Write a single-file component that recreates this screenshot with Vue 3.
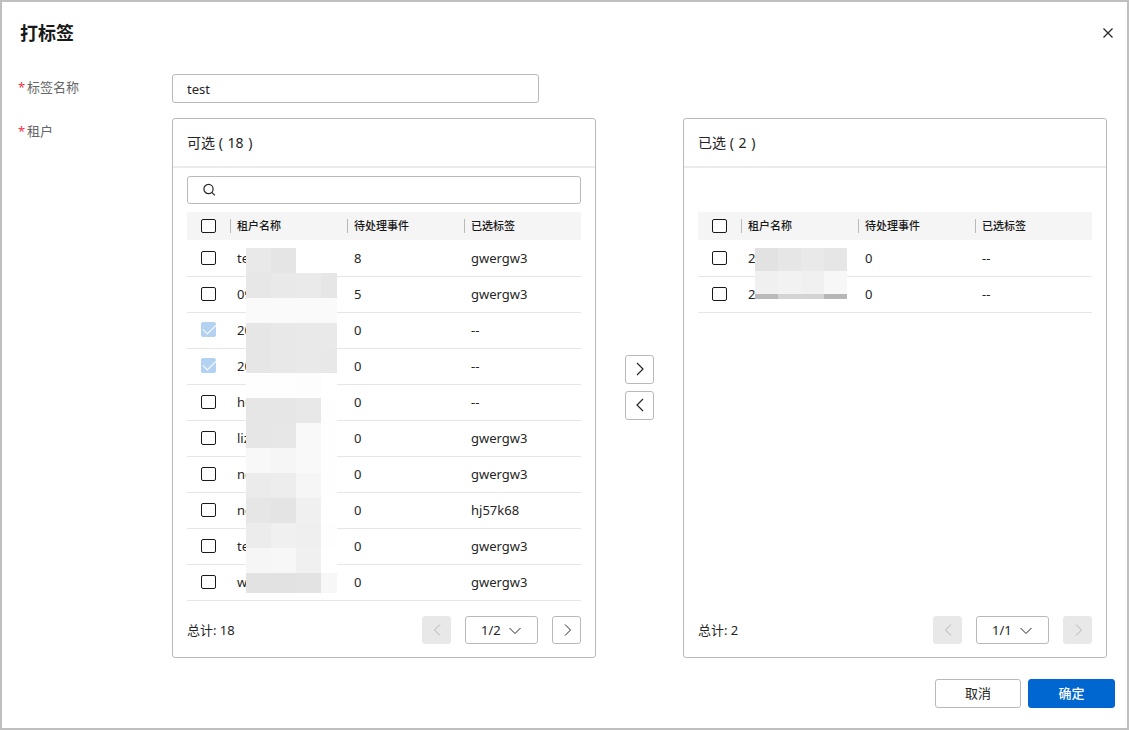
<template>
  <form class="dialog" @submit.prevent>
    <header class="dialog-head">
      <h1>打标签</h1>
      <button type="button" class="close" aria-label="关闭">
        <svg width="12" height="12" viewBox="0 0 12 12"><path d="M1.5 1.5l9 9M10.5 1.5l-9 9" /></svg>
      </button>
    </header>

    <div class="field">
      <label class="field-label" for="tag-name"><span class="star">*</span>标签名称</label>
      <input id="tag-name" v-model="tagName" class="text-input" type="text" />
    </div>

    <div class="field field-transfer">
      <span id="tenant-label" class="field-label"><span class="star">*</span>租户</span>
      <div class="transfer" role="group" aria-labelledby="tenant-label">
        <template v-for="(panel, index) in panels" :key="panel.id">
          <!-- Move buttons sit between the two panels -->
          <div v-if="index === 1" class="moves">
            <button type="button" class="square" aria-label="添加">
              <svg width="14" height="16" viewBox="0 0 14 16"><path d="M4 2l6 6-6 6" /></svg>
            </button>
            <button type="button" class="square" aria-label="移除">
              <svg width="14" height="16" viewBox="0 0 14 16"><path d="M10 2L4 8l6 6" /></svg>
            </button>
          </div>

          <section class="panel">
            <h2 class="panel-head">
              {{ panel.title }} ( <span class="count">{{ panel.total }}</span> )
            </h2>
            <div class="panel-body">
              <div class="toolbar">
                <label v-if="panel.searchable" class="search">
                  <svg width="14" height="14" viewBox="0 0 14 14">
                    <circle cx="6.5" cy="6" r="4.6" />
                    <path d="M9.8 9.4l3 3" />
                  </svg>
                  <input v-model="keyword" type="text" aria-label="搜索" />
                </label>
              </div>

              <div class="table-wrap">
                <table>
                  <thead>
                    <tr>
                      <th class="check-col"><input type="checkbox" aria-label="全选" /></th>
                      <th v-for="name in columns" :key="name" class="named"><span>{{ name }}</span></th>
                    </tr>
                  </thead>
                  <tbody>
                    <tr v-for="(row, i) in panel.rows" :key="i">
                      <td class="check-col">
                        <input type="checkbox" :aria-label="row[0]" :checked="row[3]" :disabled="row[3]" />
                      </td>
                      <td>{{ row[0] }}</td>
                      <td>{{ row[1] }}</td>
                      <td>{{ row[2] }}</td>
                    </tr>
                  </tbody>
                </table>
                <div class="mask" :class="'mask-' + panel.id" aria-hidden="true">
                  <i v-for="(tone, i) in panel.mask" :key="i" :style="{ background: tone }"></i>
                </div>
              </div>

              <footer class="panel-foot">
                <span class="total">总计: {{ panel.total }}</span>
                <button type="button" class="square pager" disabled aria-label="上一页">
                  <svg width="14" height="16" viewBox="0 0 14 16"><path d="M10 2.5L4.5 8l5.5 5.5" /></svg>
                </button>
                <span class="page-select">
                  <select aria-label="页码">
                    <option v-for="n in panel.pages" :key="n">{{ n }}/{{ panel.pages }}</option>
                  </select>
                  <svg width="12" height="8" viewBox="0 0 12 8"><path d="M.5 1l5.5 5.5L11.5 1" /></svg>
                </span>
                <button type="button" class="square pager" :disabled="panel.pages === 1" aria-label="下一页">
                  <svg width="14" height="16" viewBox="0 0 14 16"><path d="M5 2.5L10.5 8 5 13.5" /></svg>
                </button>
              </footer>
            </div>
          </section>
        </template>
      </div>
    </div>

    <footer class="actions">
      <button type="button" class="btn">取消</button>
      <button type="submit" class="btn btn-primary">确定</button>
    </footer>
  </form>
</template>

<script setup>
import { ref } from 'vue'

const tagName = ref('test')
const keyword = ref('')

const columns = ['租户名称', '待处理事件', '已选标签']

// Grey tones of the blocks hiding tenant names, two hex digits each
const tones = (list) => list.split(' ').map((t) => (t === '--' ? 'transparent' : `#${t}${t}${t}`))

const panels = [
  {
    id: 'source',
    title: '可选',
    total: 18,
    pages: 2,
    searchable: true,
    // name, pending events, tag, already chosen
    rows: [
      ['te', 8, 'gwergw3', false],
      ['09', 5, 'gwergw3', false],
      ['20', 0, '--', true],
      ['20', 0, '--', true],
      ['hu', 0, '--', false],
      ['liz', 0, 'gwergw3', false],
      ['ne', 0, 'gwergw3', false],
      ['ne', 0, 'hj57k68', false],
      ['te', 0, 'gwergw3', false],
      ['w', 0, 'gwergw3', false],
    ],
    mask: tones(
      'e9 e5 -- -- e7 e9 ea e6 fa fa fa fa e6 e8 e9 e9 e6 e8 e9 e8 fe fe fd ff e6 e6 e8 fe ' +
        'e6 e7 f9 fe f8 f6 f9 fe eb ed f6 fe e6 e4 f0 ff ec f0 ef fe f6 f7 f0 ff e2 e2 e3 f7'
    ),
  },
  {
    id: 'target',
    title: '已选',
    total: 2,
    pages: 1,
    searchable: false,
    rows: [
      ['2', 0, '--', false],
      ['2', 0, '--', false],
    ],
    mask: tones('e2 e6 e9 e6 f0 f2 f0 f7 ba d4 d3 b6'),
  },
]
</script>

<style>
body {
  margin: 0;
}
</style>

<style scoped>
* {
  box-sizing: border-box;
}

.dialog {
  min-height: 100vh;
  padding: 16px 12px 20px 18px;
  border: 2px solid #bfbfbf;
  background: #fff;
  color: #252525;
  font: 13px/20px 'Noto Sans', 'Noto Sans CJK SC', sans-serif;
}

button,
input,
select {
  margin: 0;
  padding: 0;
  font: inherit;
  color: inherit;
}

svg {
  display: block;
  fill: none;
  stroke: currentColor;
  stroke-width: 1.2;
}

/* ── Head ── */
.dialog-head {
  display: flex;
  align-items: center;
  justify-content: space-between;
  height: 30px;
  margin-bottom: 26px;
}

h1 {
  margin: 0;
  font-size: 18px;
  line-height: 30px;
  font-weight: 700;
  color: #191919;
}

.close {
  border: 0;
  background: none;
  padding: 1px;
}

/* ── Fields ── */
.field {
  display: grid;
  grid-template-columns: 152px minmax(0, 1fr);
  padding-right: 8px;
}

.field-label {
  display: flex;
  align-self: start;
  padding-top: 3px;
  margin-left: -2px;
  color: #666;
}

.star {
  width: 9px;
  color: #f43146;
}

.text-input {
  width: 367px;
  max-width: 100%;
  height: 29px;
  padding: 0 14px;
  border: 1px solid #b9b9b9;
  border-radius: 3px;
  background: #fff;
}

.field-transfer {
  margin-top: 15px;
}

.transfer {
  display: grid;
  grid-template-columns: minmax(0, 1fr) 87px minmax(0, 1fr);
}

.moves {
  display: flex;
  flex-direction: column;
  align-items: center;
  justify-content: center;
  gap: 7px;
  padding-bottom: 2px;
}

.square {
  display: flex;
  align-items: center;
  justify-content: center;
  width: 29px;
  height: 29px;
  border: 1px solid #b9b9b9;
  border-radius: 3px;
  background: #fff;
}

.square:disabled {
  border-color: #e8e8e8;
  background: #e8e8e8;
  color: #b5b5b5;
}

/* ── Panel ── */
.panel {
  display: flex;
  flex-direction: column;
  border: 1px solid #b9b9b9;
  border-radius: 3px;
}

.panel-head {
  margin: 0;
  padding: 0 14px;
  border-bottom: 2px solid #ebebeb;
  font-size: 14px;
  line-height: 47px;
  font-weight: 400;
}

.count {
  margin: 0 1px;
}

.panel-body {
  flex: 1;
  display: flex;
  flex-direction: column;
  padding: 0 14px 13px;
}

.toolbar {
  height: 44px;
  padding: 8px 0;
}

.search {
  display: flex;
  align-items: center;
  gap: 8px;
  height: 28px;
  padding: 0 14px;
  border: 1px solid #b9b9b9;
  border-radius: 3px;
}

.search input {
  flex: 1;
  min-width: 0;
  border: 0;
  outline: 0;
  background: none;
}

/* ── Table ── */
.table-wrap {
  flex: 1;
  position: relative;
}

table {
  width: 100%;
  table-layout: fixed;
  border-collapse: separate;
  border-spacing: 0;
}

th,
td {
  height: 36px;
  padding: 0 0 2px 7px;
  border-bottom: 1px solid #e6e6e6;
  text-align: left;
  font-weight: 400;
}

th {
  height: 29px;
  padding: 0;
  border-bottom-color: #fff;
  background: #f5f5f5;
  font-size: 11px;
  line-height: 14px;
  font-weight: 500;
  color: #191919;
}

.named span {
  display: block;
  padding-left: 6px;
  border-left: 1px solid #b9b9b9;
}

.check-col {
  width: 43px;
  padding-left: 14px;
}

input[type='checkbox'] {
  appearance: none;
  display: block;
  position: relative;
  width: 15px;
  height: 14px;
  border: 1px solid #191919;
  border-radius: 2px;
  background: #fff;
}

input[type='checkbox']:checked {
  height: 15px;
  border-color: #b3d1f0;
  background: #b3d1f0;
}

input[type='checkbox']:checked::after {
  content: '';
  position: absolute;
  left: 1px;
  top: 1px;
  width: 12px;
  height: 6px;
  border: solid #fff;
  border-width: 0 0 1px 1px;
  transform: rotate(-45deg);
}

/* ── Blocks over the tenant names ── */
.mask {
  position: absolute;
  top: 36px;
  display: grid;
}

.mask-source {
  left: 59px;
  grid-template-columns: 25px 25px 25px 16px;
  grid-template-rows: repeat(13, 25px) 20px;
}

.mask-target {
  left: 57px;
  grid-template-columns: repeat(4, 23px);
  grid-template-rows: 23px 23px 5px;
}

/* ── Panel foot ── */
.panel-foot {
  display: flex;
  align-items: center;
  gap: 14px;
  padding-top: 15px;
}

.total {
  flex: 1;
}

.pager {
  height: 28px;
}

.pager svg,
.page-select svg {
  stroke-width: 1;
}

.page-select {
  position: relative;
}

.page-select select {
  display: block;
  appearance: none;
  width: 73px;
  height: 28px;
  padding: 0 28px 0 15px;
  border: 1px solid #b9b9b9;
  border-radius: 3px;
  background: #fff;
}

.page-select svg {
  position: absolute;
  right: 17px;
  top: 11px;
  pointer-events: none;
}

/* ── Actions ── */
.actions {
  display: flex;
  justify-content: flex-end;
  gap: 7px;
  margin-top: 21px;
}

.btn {
  width: 86px;
  height: 29px;
  padding-bottom: 2px;
  border: 1px solid #b9b9b9;
  border-radius: 3px;
  background: #fff;
}

.btn-primary {
  width: 87px;
  border-color: #0067d1;
  background: #0067d1;
  color: #fff;
  font-weight: 500;
}
</style>
